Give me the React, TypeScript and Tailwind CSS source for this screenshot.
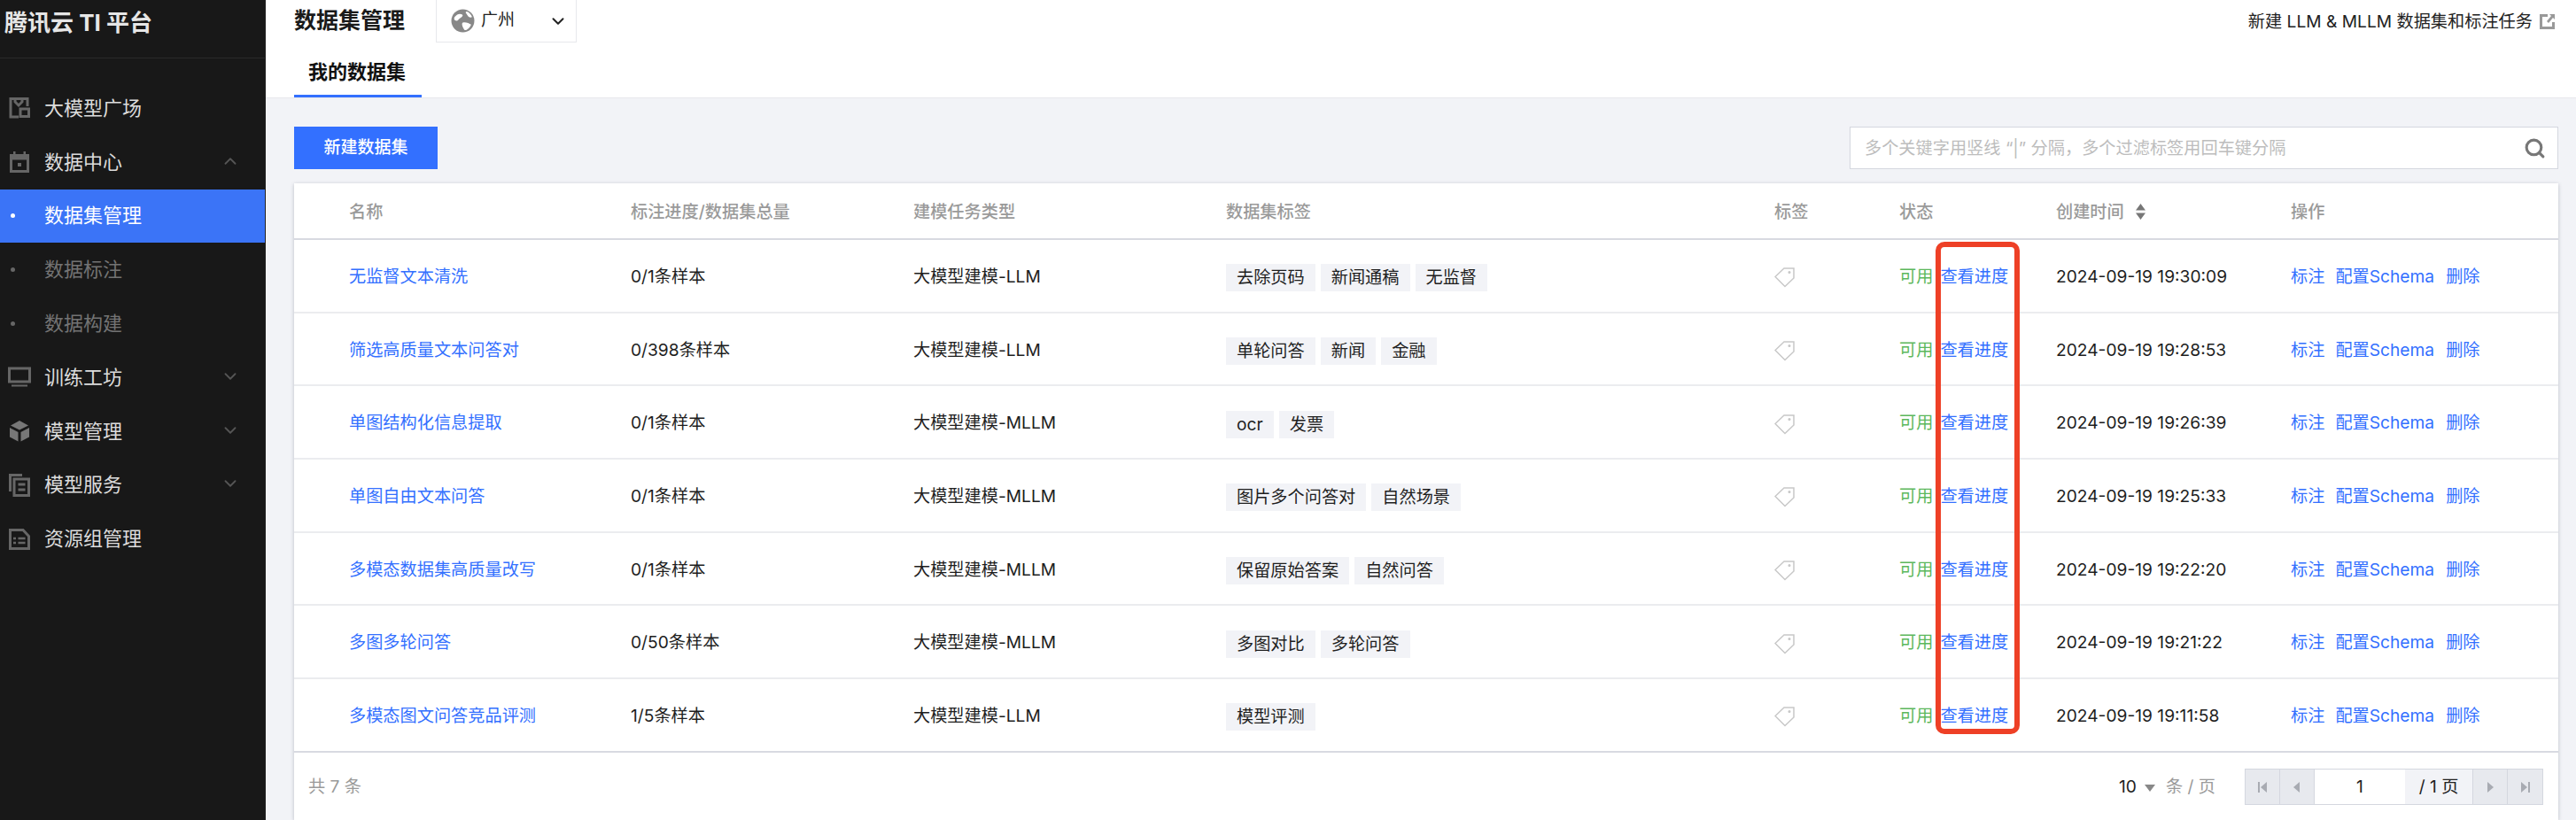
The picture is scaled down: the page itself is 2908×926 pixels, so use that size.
import { ChevronDown, ChevronUp, Search } from "lucide-react";

const rows = [
  { name: "无监督文本清洗", progress: "0/1条样本", type: "大模型建模-LLM", tags: ["去除页码", "新闻通稿", "无监督"], time: "2024-09-19 19:30:09" },
  { name: "筛选高质量文本问答对", progress: "0/398条样本", type: "大模型建模-LLM", tags: ["单轮问答", "新闻", "金融"], time: "2024-09-19 19:28:53" },
  { name: "单图结构化信息提取", progress: "0/1条样本", type: "大模型建模-MLLM", tags: ["ocr", "发票"], time: "2024-09-19 19:26:39" },
  { name: "单图自由文本问答", progress: "0/1条样本", type: "大模型建模-MLLM", tags: ["图片多个问答对", "自然场景"], time: "2024-09-19 19:25:33" },
  { name: "多模态数据集高质量改写", progress: "0/1条样本", type: "大模型建模-MLLM", tags: ["保留原始答案", "自然问答"], time: "2024-09-19 19:22:20" },
  { name: "多图多轮问答", progress: "0/50条样本", type: "大模型建模-MLLM", tags: ["多图对比", "多轮问答"], time: "2024-09-19 19:21:22" },
  { name: "多模态图文问答竞品评测", progress: "1/5条样本", type: "大模型建模-LLM", tags: ["模型评测"], time: "2024-09-19 19:11:58" },
];

function SquareIcon() {
  return (
    <svg width="24" height="24" viewBox="0 0 24 24" fill="none" stroke="#666" strokeWidth="3">
      <path d="M11 22H2V1.500h19V10" />
      <path d="M7 2v3l4 4 4-4V2" />
      <rect x="13" y="13" width="9.500" height="8.500" />
    </svg>
  );
}

function CalendarIcon() {
  return (
    <svg width="24" height="24" viewBox="0 0 24 24" fill="#666">
      <path fillRule="evenodd" d="M1 3h4V0h2.500v3h9V0H19v3h4v21H1V3zm3 6.500V21h16V9.500H4z" />
      <rect x="10" y="13" width="4" height="4" />
    </svg>
  );
}

function ScreenIcon() {
  return (
    <svg width="26" height="24" viewBox="0 0 26 24" fill="none" stroke="#666" strokeWidth="3">
      <rect x="1.500" y="2" width="23" height="15" />
      <path d="M4 21.500h18" strokeWidth="2" />
    </svg>
  );
}

function CubeIcon() {
  return (
    <svg width="24" height="24" viewBox="0 0 24 24" fill="#777">
      <path d="M12 0l10 5.500L12 10.500 2 5.500z" />
      <path d="M1 8l9.500 5v10.500L1 18.500z" />
      <path d="M23 8l-9.500 5v10.500L23 18.500z" />
    </svg>
  );
}

function PagesIcon() {
  return (
    <svg width="24" height="26" viewBox="0 0 24 26" fill="none" stroke="#666" strokeWidth="3">
      <path d="M1.500 20V1.500H15" />
      <rect x="6" y="6" width="16.500" height="18.500" />
      <path d="M10.500 12h8M10.500 18h8" strokeWidth="3" />
    </svg>
  );
}

function DocIcon() {
  return (
    <svg width="24" height="24" viewBox="0 0 24 24" fill="none" stroke="#666" strokeWidth="3">
      <path d="M1.500 1.500h14.500l6.500 7v14H1.500z" />
      <path d="M5 11h3M10.500 11h8M5 16h3M10.500 16h8" strokeWidth="2.600" />
    </svg>
  );
}

function TagIcon() {
  return (
    <svg width="24" height="23" viewBox="0 0 24 23" fill="none" stroke="#c8c8c8" strokeWidth="1.500">
      <path d="M11 1h11v11l-10 9.500L1 10.500z" />
      <circle cx="17" cy="5.500" r="0.800" fill="#c8c8c8" />
    </svg>
  );
}

function NavItem({
  icon,
  label,
  arrow,
}: {
  icon: React.ReactNode;
  label: string;
  arrow?: "up" | "down";
}) {
  return (
    <div className="flex h-[60.800px] items-center text-[#dcdcdc]">
      <div className="flex w-[50px] justify-center pr-[12px] pl-[6px]">{icon}</div>
      <span className="flex-1 text-[22px]">{label}</span>
      {arrow === "up" && <ChevronUp size={22} strokeWidth={2} className="mr-[28px] mb-[3px] text-[#555]" />}
      {arrow === "down" && <ChevronDown size={22} strokeWidth={2} className="mr-[28px] mb-[3px] text-[#555]" />}
    </div>
  );
}

function SubItem({ label, active }: { label: string; active?: boolean }) {
  return (
    <div className={active ? "flex h-[60.800px] items-center bg-[#3b74f7] text-white" : "flex h-[60.800px] items-center text-[#737373]"}>
      <div className="flex w-[50px] justify-center pr-[22px]">
        <span className={active ? "h-[5px] w-[5px] rounded-full bg-white" : "h-[5px] w-[5px] rounded-full bg-[#666]"} />
      </div>
      <span className="text-[22px]">{label}</span>
    </div>
  );
}

function Sidebar() {
  return (
    <aside className="w-[300px] shrink-0 border-r border-[#222] bg-[#181818]">
      <div className="flex h-[66px] items-center border-b border-[#2a2a2a] pb-[15px] pl-[5px] text-[26px] font-bold text-[#e6e6e6]">
        腾讯云 TI 平台
      </div>
      <nav className="pt-[26px]">
        <NavItem icon={<SquareIcon />} label="大模型广场" />
        <NavItem icon={<CalendarIcon />} label="数据中心" arrow="up" />
        <SubItem label="数据集管理" active />
        <SubItem label="数据标注" />
        <SubItem label="数据构建" />
        <NavItem icon={<ScreenIcon />} label="训练工坊" arrow="down" />
        <NavItem icon={<CubeIcon />} label="模型管理" arrow="down" />
        <NavItem icon={<PagesIcon />} label="模型服务" arrow="down" />
        <NavItem icon={<DocIcon />} label="资源组管理" />
      </nav>
    </aside>
  );
}

function Header() {
  return (
    <header className="h-[111px] shrink-0 border-b border-[#e7e8ec] bg-white pl-[32px]">
      <div className="flex h-[48px] items-start">
        <h1 className="flex h-[48px] w-[160px] items-center text-[25px] font-bold text-[#1a1a1a]">数据集管理</h1>
        <div className="flex h-[48px] w-[159px] items-center border border-t-0 border-[#e7e8ec] pr-[9px] pl-[16px]">
          <svg width="27" height="27" viewBox="0 0 26 26">
            <circle cx="13" cy="13" r="12.500" fill="#888" />
            <path d="M4 9c3-4 6-4 8-3s0 3-2 4-2 3-4 3-3-2-2-4zM13 15c3-1 7 1 9 2-1 3-5 7-7 6-2-2-4-7-2-8zM17 3c2 0 5 3 6 6-2 1-4 0-5-2s-3-3-1-4z" fill="#fff" />
          </svg>
          <span className="ml-[7px] flex-1 text-[19px] text-[#222]">广州</span>
          <ChevronDown size={22} strokeWidth={2.200} className="text-[#222]" />
        </div>
        <div className="ml-auto flex h-[48px] items-center pr-[24px] text-[19.200px] text-[#222]">
          新建 LLM &amp; MLLM 数据集和标注任务
          <svg width="17" height="17" viewBox="0 0 17 17" className="ml-[8px]">
            <path d="M0 0h9v3H3v11h11V9h3v8H0z" fill="#999" />
            <path d="M11 0h6v6l-2-2-5 6-2-2 5-6z" fill="#999" />
          </svg>
        </div>
      </div>
      <div className="flex h-[62px]">
        <div className="flex h-[62px] w-[144px] items-end justify-center border-b-[3px] border-[#3370ff] pb-[9px] pr-[2px] text-[22px] font-bold text-[#111]">
          我的数据集
        </div>
      </div>
    </header>
  );
}

function PagerButton({ d }: { d: string }) {
  return (
    <div className="flex w-[39px] items-center justify-center border-r border-[#d4d7df] bg-[#e7e9ee] last:border-r-0">
      <svg width="14" height="14" viewBox="0 0 14 14" fill="#a8abb2">
        <path d={d} />
      </svg>
    </div>
  );
}

function DatasetTable() {
  return (
    <div className="relative flex min-h-0 flex-1 flex-col bg-white shadow-[0_1px_4px_rgba(54,58,80,0.3)]">
      <table className="w-full table-fixed border-collapse text-[19.200px]">
        <colgroup>
          <col className="w-[380px]" />
          <col className="w-[319px]" />
          <col className="w-[353px]" />
          <col className="w-[619px]" />
          <col className="w-[141px]" />
          <col className="w-[177px]" />
          <col className="w-[265px]" />
          <col className="w-[302px]" />
        </colgroup>
        <thead>
          <tr className="h-[63px] border-b-2 border-[#d8dae1] text-left text-[#9a9a9a] [&>th]:pt-[2px]">
            <th className="pl-[62px] font-medium">名称</th>
            <th className="font-medium">标注进度/数据集总量</th>
            <th className="font-medium">建模任务类型</th>
            <th className="font-medium">数据集标签</th>
            <th className="font-medium">标签</th>
            <th className="font-medium">状态</th>
            <th className="font-medium">
              <span className="inline-flex items-center">
                创建时间
                <svg width="13" height="24" viewBox="0 0 13 24" fill="#777" className="ml-[12px]">
                  <path d="M6.500 3l5.500 7.500H1zM6.500 21L1 13.500h11z" />
                </svg>
              </span>
            </th>
            <th className="font-medium">操作</th>
          </tr>
        </thead>
        <tbody>
          {rows.map((row) => (
            <tr key={row.time} className="h-[82.670px] border-b-2 border-[#ebecef] text-[#1e1e1e] last:border-[#d8dae1] [&>td]:pt-[2px]">
              <td className="pl-[62px] text-[#3370ff]">{row.name}</td>
              <td>{row.progress}</td>
              <td>{row.type}</td>
              <td>
                <div className="flex gap-[6px] pt-[3px]">
                  {row.tags.map((tag) => (
                    <span key={tag} className="flex h-[31px] items-center bg-[#f2f3f7] px-[12px]">
                      {tag}
                    </span>
                  ))}
                </div>
              </td>
              <td>
                <div className="pt-[3px]">
                  <TagIcon />
                </div>
              </td>
              <td>
                <span className="text-[#5cb85c]">可用</span>
                <span className="ml-[8px] text-[#3370ff]">查看进度</span>
              </td>
              <td>{row.time}</td>
              <td className="text-[#3370ff]">
                <span>标注</span>
                <span className="ml-[12px]">配置Schema</span>
                <span className="ml-[13px]">删除</span>
              </td>
            </tr>
          ))}
        </tbody>
      </table>

      <div className="flex flex-1 items-center justify-between pt-[2px] pr-[17px] pl-[16px] text-[19.200px] text-[#9a9a9a]">
        <span>共 7 条</span>
        <div className="flex items-center">
          <span className="text-[#222]">10</span>
          <span className="mx-[9px] mt-[3px] h-0 w-0 border-x-[6px] border-t-[8px] border-x-transparent border-t-[#888]" />
          <span className="ml-[3px]">条 / 页</span>
          <div className="ml-[33px] flex h-[41px] border border-[#d4d7df]">
            <PagerButton d="M2 1h2v12H2zM12 1v12L5 7z" />
            <PagerButton d="M10 1v12L3 7z" />
            <div className="flex w-[102px] items-center justify-center bg-white text-[#222]">1</div>
            <div className="flex w-[77px] items-center justify-center border-r border-[#d4d7df] bg-[#f2f3f7] text-[#222]">/ 1 页</div>
            <PagerButton d="M4 1v12l7-6z" />
            <PagerButton d="M2 1v12l7-6zM10 1h2v12h-2z" />
          </div>
        </div>
      </div>

      {/* 标注框，盖在“查看进度”一列上 */}
      <div className="pointer-events-none absolute top-[66px] left-[1853px] h-[556px] w-[95px] rounded-[10px] border-[6px] border-[#ee4026]" />
    </div>
  );
}

export default function App() {
  return (
    <div className="flex h-[926px] w-[2908px] overflow-hidden font-['Inter','Noto_Sans_CJK_SC',sans-serif]">
      <Sidebar />
      <main className="flex min-w-0 flex-1 flex-col bg-[#f2f3f7]">
        <Header />
        <div className="flex min-h-0 flex-1 flex-col pt-[32px] pr-[20px] pl-[32px]">
          <div className="mb-[16px] flex h-[48px] shrink-0 justify-between">
            <button className="h-[48px] w-[162px] bg-[#3370ff] text-[19px] font-medium text-white">新建数据集</button>
            <div className="flex h-[48px] w-[800px] items-center border border-[#d4d7df] bg-white pr-[13px] pl-[16px]">
              <span className="flex-1 text-[19.200px] text-[#bdbdbd]">多个关键字用竖线 “|” 分隔，多个过滤标签用回车键分隔</span>
              <Search size={25} strokeWidth={3} className="text-[#777]" />
            </div>
          </div>
          <DatasetTable />
        </div>
      </main>
    </div>
  );
}
